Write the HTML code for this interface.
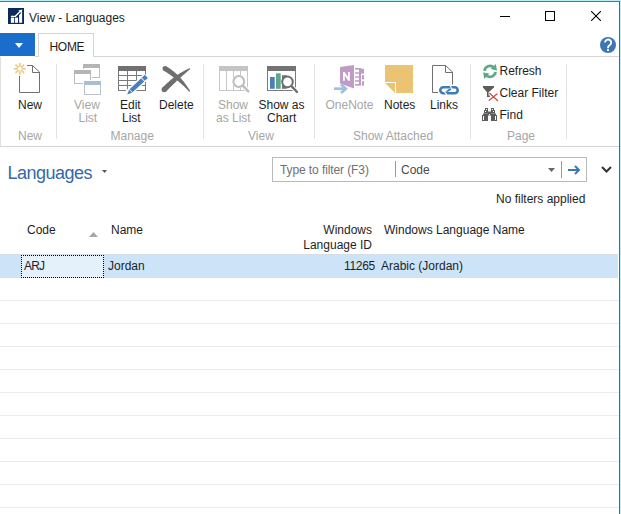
<!DOCTYPE html>
<html><head><meta charset="utf-8">
<style>
html,body{margin:0;padding:0;}
body{width:621px;height:514px;overflow:hidden;background:#fff;position:relative;font-family:"Liberation Sans",sans-serif;font-size:12px;color:#1e1e1e;}
.a{position:absolute;}
.t{position:absolute;white-space:nowrap;line-height:12px;font-size:12px;}
.g{color:#a6a6a6;}
.c{text-align:center;}
.sep{position:absolute;width:1px;background:#e3e3e3;}
.hl{position:absolute;left:0;width:619px;height:1px;background:#ebebeb;}
</style></head><body>
<!-- window frame -->
<div class="a" style="left:0;top:0;width:621px;height:1px;background:#b8eef6"></div>
<div class="a" style="left:0;top:1px;width:620px;height:1px;background:#4a78a2"></div>
<div class="a" style="left:619px;top:1px;width:1px;height:513px;background:#3f6d99"></div>
<div class="a" style="left:620px;top:0;width:1px;height:514px;background:#b8eef6"></div>

<!-- title icon -->
<svg class="a" style="left:8px;top:8px" width="16" height="16" viewBox="0 0 16 16">
<rect width="16" height="16" fill="#0b2a5a"/>
<g fill="#fff">
<rect x="2.9" y="9.6" width="3.2" height="5.2"/>
<rect x="6.9" y="9.6" width="3.1" height="5.2"/>
<path d="M11.1 14.8 H14.1 V4 L11.1 7Z"/>
<path d="M10.4 2.4 L14.3 1.5 L13.7 5.4Z"/>
</g>
<path d="M2.9 8.3 H7.3 L12.6 3" stroke="#fff" stroke-width="1.3" fill="none"/>
</svg>
<div class="t" style="left:29px;top:12px">View - Languages</div>

<!-- window controls -->
<div class="a" style="left:500px;top:16px;width:10px;height:1px;background:#000"></div>
<div class="a" style="left:545px;top:11px;width:8px;height:8px;border:1px solid #000"></div>
<svg class="a" style="left:591px;top:11px" width="10" height="10" viewBox="0 0 10 10"><path d="M0 0L10 10M10 0L0 10" stroke="#000" stroke-width="1.1"/></svg>

<!-- app button & tab -->
<div class="a" style="left:0;top:33px;width:35px;height:23px;background:#1a6dca"></div>
<svg class="a" style="left:14.5px;top:42.5px" width="8" height="5" viewBox="0 0 8 5"><path d="M0 0H8L4 5Z" fill="#fff"/></svg>
<div class="a" style="left:38px;top:33px;width:54px;height:23px;border:1px solid #d5d5d5;border-bottom:none;background:#fff"></div>
<div class="t" style="left:49.5px;top:41px;letter-spacing:-0.3px">HOME</div>
<!-- help -->
<svg class="a" style="left:600px;top:37px" width="16" height="16" viewBox="0 0 16 16"><circle cx="8" cy="8" r="8" fill="#3d76b2"/><path d="M5 5.6 A3.1 3.1 0 1 1 9.9 8.1 Q8 9.2 8 10.6 V11.2" stroke="#fff" stroke-width="1.9" fill="none"/><rect x="7" y="12.2" width="2" height="1.9" fill="#fff"/></svg>

<!-- ribbon borders -->
<div class="a" style="left:35px;top:56px;width:3px;height:1px;background:#d5d5d5"></div>
<div class="a" style="left:93px;top:56px;width:526px;height:1px;background:#d5d5d5"></div>
<div class="a" style="left:0;top:57px;width:1px;height:89px;background:#e0e0e0"></div>
<div class="a" style="left:0;top:146px;width:619px;height:1px;background:#d5d5d5"></div>

<!-- separators -->
<div class="sep" style="left:56px;top:64px;height:75px"></div>
<div class="sep" style="left:203px;top:64px;height:75px"></div>
<div class="sep" style="left:314px;top:64px;height:75px"></div>
<div class="sep" style="left:470px;top:64px;height:75px"></div>
<div class="sep" style="left:566px;top:64px;height:75px"></div>

<!-- group labels -->
<div class="t g" style="left:18px;top:130px">New</div>
<div class="t g" style="left:110.5px;top:130px">Manage</div>
<div class="t g" style="left:248px;top:130px">View</div>
<div class="t g" style="left:353px;top:130px">Show Attached</div>
<div class="t g" style="left:507px;top:130px">Page</div>

<!-- button labels -->
<div class="t" style="left:18px;top:99px">New</div>
<div class="t g" style="left:74px;top:99px">View</div>
<div class="t g" style="left:78.5px;top:112px">List</div>
<div class="t" style="left:120px;top:99px">Edit</div>
<div class="t" style="left:122px;top:112px">List</div>
<div class="t" style="left:159px;top:99px">Delete</div>
<div class="t g" style="left:218px;top:99px">Show</div>
<div class="t g" style="left:216px;top:112px">as List</div>
<div class="t" style="left:258.5px;top:99px">Show as</div>
<div class="t" style="left:267px;top:112px">Chart</div>
<div class="t g" style="left:325.5px;top:99px">OneNote</div>
<div class="t" style="left:384px;top:99px">Notes</div>
<div class="t" style="left:430px;top:99px">Links</div>
<div class="t" style="left:499.5px;top:65px">Refresh</div>
<div class="t" style="left:499.5px;top:87px">Clear Filter</div>
<div class="t" style="left:499.5px;top:109px">Find</div>

<!-- page header -->
<div class="a" style="left:7.5px;top:163.5px;font-size:18px;line-height:18px;letter-spacing:-0.5px;color:#3668ab;white-space:nowrap">Languages</div>
<svg class="a" style="left:102px;top:170px" width="5" height="3" viewBox="0 0 5 3"><path d="M0 0H5L2.5 3Z" fill="#555"/></svg>

<!-- filter box -->
<div class="a" style="left:272px;top:157px;width:313px;height:23px;border:1px solid #b9b9b9;background:#fff"></div>
<div class="t" style="left:280px;top:164px;color:#707070;letter-spacing:-0.1px">Type to filter (F3)</div>
<div class="a" style="left:395px;top:161px;width:1px;height:16px;background:#9a9a9a"></div>
<div class="t" style="left:401px;top:164px;color:#4a4a4a">Code</div>
<svg class="a" style="left:548px;top:168px" width="7" height="4" viewBox="0 0 7 4"><path d="M0 0H7L3.5 4Z" fill="#666"/></svg>
<div class="a" style="left:561px;top:161px;width:1px;height:17px;background:#9a9a9a"></div>
<svg class="a" style="left:568px;top:165px" width="13" height="10" viewBox="0 0 13 10"><path d="M0 5H11M7 1L11 5L7 9" stroke="#3b78b6" stroke-width="2" fill="none"/></svg>
<svg class="a" style="left:601px;top:166px" width="11" height="7" viewBox="0 0 11 7"><path d="M1 1L5.5 5.5L10 1" stroke="#333" stroke-width="2" fill="none"/></svg>

<div class="t" style="left:496px;top:192.5px">No filters applied</div>

<!-- table header -->
<div class="t" style="left:27px;top:224px">Code</div>
<svg class="a" style="left:89px;top:232px" width="9" height="5" viewBox="0 0 9 5"><path d="M0 5H9L4.5 0Z" fill="#a6a6a6"/></svg>
<div class="t" style="left:111px;top:224px">Name</div>
<div class="t" style="left:272px;top:224px;width:100px;text-align:right">Windows</div>
<div class="t" style="left:272px;top:238.5px;width:100px;text-align:right">Language ID</div>
<div class="t" style="left:384px;top:224px">Windows Language Name</div>

<!-- selected row -->
<div class="a" style="left:0;top:254px;width:618px;height:1px;background:#d5dde6"></div>
<div class="a" style="left:0;top:255px;width:618px;height:23px;background:#cde4f8"></div>
<div class="a" style="left:21px;top:255px;width:81px;height:21px;border:1px dotted #000;background:#e4f0fa"></div>
<div class="t" style="left:24px;top:260px;letter-spacing:-0.8px">ARJ</div>
<div class="t" style="left:108px;top:260px">Jordan</div>
<div class="t" style="left:275px;top:260px;width:100px;text-align:right;letter-spacing:-0.3px">11265</div>
<div class="t" style="left:381px;top:260px">Arabic (Jordan)</div>

<!-- grid lines -->
<div class="hl" style="top:300px"></div>
<div class="hl" style="top:323px"></div>
<div class="hl" style="top:346px"></div>
<div class="hl" style="top:369px"></div>
<div class="hl" style="top:392px"></div>
<div class="hl" style="top:415px"></div>
<div class="hl" style="top:438px"></div>
<div class="hl" style="top:461px"></div>
<div class="hl" style="top:484px"></div>
<div class="hl" style="top:507px"></div>

<!-- ICONS -->

<!-- New icon -->
<svg class="a" style="left:12px;top:62px" width="32" height="32" viewBox="0 0 32 32">
<path d="M7.5 14V30.5H27.5V10L20.5 3.5H15" stroke="#707070" stroke-width="1" fill="none"/>
<path d="M20.5 3.5V10.5H27.5" stroke="#707070" stroke-width="1" fill="none"/>
<g stroke="#ebcf8a" stroke-width="1.9" stroke-linecap="round">
<path d="M7.8 1.6V4.2M7.8 9.4V12M2.6 6.8H5.2M10.4 6.8H13M4.1 3.1L5.9 4.9M9.7 8.7L11.5 10.5M11.5 3.1L9.7 4.9M5.9 8.7L4.1 10.5"/>
</g>
</svg>
<!-- View List icon -->
<svg class="a" style="left:70px;top:60px" width="34" height="38" viewBox="0 0 34 38">
<rect x="13.5" y="4.5" width="16" height="13" fill="#fff" stroke="#bdbdbd"/>
<rect x="13" y="4" width="17" height="4" fill="#b5b5b5"/>
<rect x="3" y="9" width="19" height="16" fill="#fff"/>
<rect x="4.5" y="10.5" width="16" height="13" fill="#fff" stroke="#bdbdbd"/>
<rect x="4" y="10" width="17" height="4" fill="#b5b5b5"/>
<rect x="13" y="20" width="19" height="16" fill="#fff"/>
<rect x="14.5" y="21.5" width="16" height="13" fill="#fff" stroke="#bcc3cc"/>
<rect x="14" y="21" width="17" height="4" fill="#a9bdd7"/>
</svg>
<!-- Edit List icon -->
<svg class="a" style="left:114px;top:62px" width="36" height="36" viewBox="0 0 36 36">
<rect x="4.5" y="4.5" width="27" height="24" fill="#fff" stroke="#7a7a7a"/>
<rect x="4" y="4" width="28" height="5" fill="#707070"/>
<path d="M4 13.5H32M4 18.5H32M4 23.5H32M13.5 9V28M22.5 9V28" stroke="#7a7a7a" stroke-width="1"/>
<g transform="translate(13.2 32.4) rotate(-43.3)">
<path d="M-0.8 -3.6 H27 V3.6 H-0.8 Z" fill="#fff"/>
<path d="M0 0 L4.6 -2.2 V2.2 Z" fill="#4a7fbf"/>
<rect x="5.3" y="-2.2" width="16" height="4.4" fill="#4a7fbf"/>
<rect x="22.1" y="-2.2" width="4.2" height="4.4" fill="#4a7fbf"/>
</g>
</svg>
<!-- Delete icon -->
<svg class="a" style="left:0;top:0" width="210" height="100" viewBox="0 0 210 100">
<path d="M163.73 70.65 L164.59 71.17 L165.45 71.70 L166.31 72.25 L167.17 72.81 L168.03 73.38 L168.89 73.96 L169.74 74.56 L170.59 75.16 L171.44 75.78 L172.29 76.42 L173.15 77.06 L174.00 77.72 L174.85 78.39 L175.70 79.07 L176.55 79.76 L177.40 80.47 L178.25 81.19 L179.10 81.93 L179.95 82.67 L180.80 83.44 L181.66 84.21 L182.51 85.00 L183.37 85.80 L184.23 86.61 L185.08 87.44 L185.94 88.29 L186.81 89.14 L187.67 90.01 L188.53 90.90 L189.40 91.80 L190.20 91.20 L189.55 90.11 L188.90 89.05 L188.23 88.00 L187.55 86.96 L186.86 85.95 L186.16 84.95 L185.44 83.96 L184.72 83.00 L183.99 82.05 L183.24 81.12 L182.48 80.21 L181.72 79.31 L180.94 78.44 L180.15 77.58 L179.35 76.74 L178.55 75.91 L177.73 75.11 L176.90 74.32 L176.06 73.56 L175.22 72.81 L174.36 72.08 L173.50 71.36 L172.62 70.67 L171.74 70.00 L170.85 69.34 L169.95 68.71 L169.04 68.09 L168.13 67.49 L167.20 66.91 L166.27 66.35Z" fill="#6f6f6f"/>
<circle cx="165" cy="68.5" r="2.5" fill="#6f6f6f"/>
<path d="M166.09 91.46 L166.98 90.56 L167.86 89.67 L168.74 88.79 L169.61 87.92 L170.48 87.06 L171.34 86.22 L172.19 85.38 L173.04 84.56 L173.88 83.74 L174.72 82.94 L175.55 82.15 L176.37 81.37 L177.19 80.60 L178.00 79.84 L178.81 79.09 L179.61 78.35 L180.40 77.62 L181.19 76.90 L181.98 76.20 L182.76 75.50 L183.54 74.81 L184.31 74.13 L185.08 73.46 L185.84 72.80 L186.60 72.15 L187.36 71.51 L188.11 70.87 L188.86 70.25 L189.61 69.64 L190.35 69.03 L189.85 68.17 L188.95 68.54 L188.05 68.93 L187.14 69.34 L186.23 69.77 L185.32 70.22 L184.41 70.69 L183.50 71.18 L182.58 71.69 L181.67 72.22 L180.75 72.77 L179.83 73.34 L178.91 73.93 L177.99 74.54 L177.07 75.16 L176.14 75.81 L175.22 76.47 L174.30 77.16 L173.38 77.86 L172.45 78.58 L171.53 79.32 L170.60 80.08 L169.68 80.86 L168.76 81.66 L167.84 82.47 L166.91 83.30 L165.99 84.16 L165.07 85.02 L164.15 85.91 L163.23 86.82 L162.31 87.74Z" fill="#6f6f6f"/>
<circle cx="164.2" cy="89.6" r="2.65" fill="#6f6f6f"/>
</svg>
<!-- Show as List icon -->
<svg class="a" style="left:214px;top:62px" width="38" height="34" viewBox="0 0 38 34">
<rect x="5.5" y="4.5" width="28" height="24" fill="#fff" stroke="#c6c6c6"/>
<rect x="5" y="4" width="29" height="5" fill="#c4c4c4"/>
<path d="M12.5 9V28M19.5 9V28M26.5 9V28" stroke="#c6c6c6"/>
<circle cx="24.8" cy="19.5" r="6.6" fill="#fff"/>
<circle cx="24.8" cy="19.5" r="5.4" fill="#fff" stroke="#bdbdbd" stroke-width="2"/>
<path d="M29.2 24 L34.6 29.4" stroke="#fff" stroke-width="4.5"/>
<path d="M29 23.8 L34.3 29.3" stroke="#bdbdbd" stroke-width="2.4" stroke-linecap="round"/>
</svg>
<!-- Show as Chart icon -->
<svg class="a" style="left:262px;top:62px" width="38" height="34" viewBox="0 0 38 34">
<rect x="5.5" y="4.5" width="28" height="24" fill="#fff" stroke="#7a7a7a"/>
<rect x="5" y="4" width="29" height="5" fill="#737373"/>
<rect x="8" y="15" width="4.7" height="11.8" fill="#4a7fba"/>
<rect x="14" y="11.3" width="4.7" height="15.5" fill="#5fa58e"/>
<rect x="20" y="13.2" width="4.8" height="13.6" fill="#737373"/>
<circle cx="25.5" cy="19.9" r="5.3" fill="#fff" stroke="#6e6e6e" stroke-width="2"/>
<path d="M29.5 24.2 L35.2 30.2" stroke="#fff" stroke-width="4.5"/>
<path d="M29.5 24.2 L35 30" stroke="#6e6e6e" stroke-width="2.4" stroke-linecap="round"/>
</svg>
<!-- OneNote icon -->
<svg class="a" style="left:330px;top:60px" width="38" height="38" viewBox="0 0 38 38">
<path d="M10 7 L24 5 V28.5 L10 23.6 Z" fill="#c09bc5"/>
<path d="M13 19.5 V12 H14.6 L18 17 V12 H19.8 V20.7 H18.2 L14.8 15.6 V20.7 H13Z" fill="#fff"/>
<g fill="#c09bc5">
<rect x="25" y="8" width="4" height="1.6"/><rect x="25" y="12.3" width="4" height="1.4"/><rect x="25" y="16.4" width="4" height="1.3"/><rect x="25" y="20.2" width="4" height="1.5"/><rect x="25" y="24" width="4" height="1.6"/>
<rect x="29" y="8" width="2" height="17.7"/>
<rect x="29" y="8.8" width="5" height="4.8"/>
<rect x="32" y="15.1" width="2" height="4.3"/>
<rect x="32" y="21.2" width="2" height="4.5"/>
</g>
<path d="M4 28.7 H14.5" stroke="#9dbfe1" stroke-width="2.7"/>
<path d="M11 24.5 L15.8 28.7 L11 33" stroke="#9dbfe1" stroke-width="2.8" fill="none"/>
</svg>
<!-- Notes icon -->
<svg class="a" style="left:380px;top:60px" width="38" height="38" viewBox="0 0 38 38">
<path d="M5 5 H33 V33 H16 V22 H5 Z" fill="#ebc473"/>
<path d="M5 23 H15 V33 Z" fill="#ebc473"/>
</svg>
<!-- Links icon -->
<svg class="a" style="left:426px;top:60px" width="38" height="38" viewBox="0 0 38 38">
<path d="M12 32.5 H6.5 V5.5 H19.5 L26.5 12 V24.5" stroke="#707070" fill="none"/>
<path d="M19.5 5.5 V12.5 H26.5" stroke="#707070" fill="none"/>
<rect x="14.3" y="27.3" width="17.4" height="5.9" rx="2.95" ry="2.95" fill="none" stroke="#3f7cba" stroke-width="2.6"/>
<path d="M19 31.7 L22.2 31.7 L26.6 28.7 L23.4 28.7Z" fill="#3f7cba"/>
<path d="M24.1 25.6 L26.4 30.3 M18.2 31.4 L21 34.8" stroke="#fff" stroke-width="1.1"/>
</svg>
<!-- Refresh icon -->
<svg class="a" style="left:480px;top:62px" width="20" height="20" viewBox="0 0 20 20">
<path d="M4.5 8.8 A5.5 5.5 0 0 1 13.8 5.4" stroke="#5ea88c" stroke-width="2.7" fill="none"/>
<path d="M15.8 2 L17 8.6 L10.6 7.1Z" fill="#5ea88c"/>
<path d="M15.5 9.8 A5.5 5.5 0 0 1 6.2 13.2" stroke="#5ea88c" stroke-width="2.7" fill="none"/>
<path d="M3.1 10.4 L4.3 16.9 L9.4 11.4Z" fill="#5ea88c"/>
</svg>
<!-- Clear filter icon -->
<svg class="a" style="left:480px;top:84px" width="20" height="20" viewBox="0 0 20 20">
<path d="M3 2 H14 V3.4 L8.6 8.2 V11.5 H9.8 V13 H7 V8.2 L3 3.4Z" fill="#5c5c5c"/>
<path d="M9.8 9.4 L17.6 16.5 M17 10 L9.2 16.3" stroke="#cf5045" stroke-width="1.35" stroke-linecap="round"/>
</svg>
<!-- Find icon -->
<svg class="a" style="left:480px;top:104px" width="20" height="20" viewBox="0 0 20 20">
<g fill="#5c5c5c">
<rect x="5" y="4" width="3" height="2"/>
<rect x="4" y="6" width="4" height="3.5"/>
<rect x="3" y="9.5" width="5" height="1.5"/>
<rect x="2" y="11" width="6" height="6"/>
<rect x="8" y="7.5" width="3" height="4"/>
<rect x="11" y="4" width="3" height="2"/>
<rect x="11" y="6" width="4" height="3.5"/>
<rect x="11" y="9.5" width="5" height="1.5"/>
<rect x="11" y="11" width="6" height="6"/>
</g>
<g fill="#fff">
<rect x="6" y="5" width="1" height="1"/>
<rect x="5" y="7" width="1" height="1"/>
<rect x="12" y="5" width="1" height="1"/>
<rect x="13" y="7" width="1" height="1"/>
<rect x="9" y="10" width="1" height="1"/>
<rect x="3" y="12" width="1" height="4"/>
<rect x="15" y="12" width="1" height="4"/>
</g>
</svg>

</body></html>
